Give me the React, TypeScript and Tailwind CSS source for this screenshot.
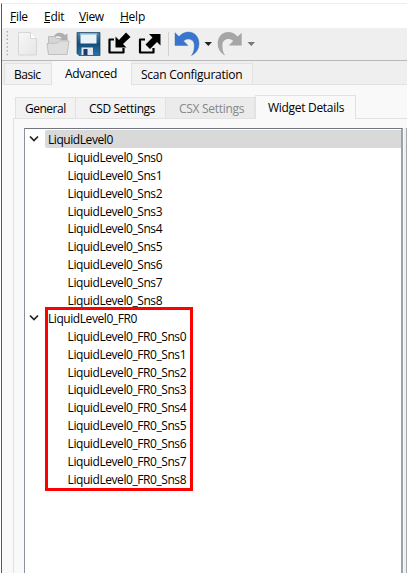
import React from 'react';

const sensors = [0, 1, 2, 3, 4, 5, 6, 7, 8];

function MenuItem({ label, className }: { label: string; className: string }) {
  return (
    <span className={`flex shrink-0 items-start ${className}`}>
      <span className="h-[15px] border-b border-black leading-[18px]">{label[0]}</span>
      <span>{label.slice(1)}</span>
    </span>
  );
}

function Parent({ name, selected = false }: { name: string; selected?: boolean }) {
  return (
    <div className="flex h-[17.9px] items-center">
      <svg className="ml-[4px] h-[10px] w-[10px] shrink-0" viewBox="0 0 10 10" fill="none" stroke="#222" strokeWidth="1.7">
        <path d="M1 2.5 5 6.5 9 2.5" />
      </svg>
      <div className={`ml-[6px] flex h-[18px] flex-1 items-center rounded-l-xs pl-[3px] ${selected ? 'bg-[#d9d9d9]' : ''}`}>
        <span className="pt-[2px]">{name}</span>
      </div>
    </div>
  );
}

function Toolbar() {
  return (
    <svg className="block h-8 w-full" viewBox="0 28 405 32">
      <defs>
        <linearGradient id="disk" x1="0" y1="0" x2="0" y2="1">
          <stop offset="0" stopColor="#4f87ad" />
          <stop offset=".5" stopColor="#164d79" />
          <stop offset="1" stopColor="#2477aa" />
        </linearGradient>
        <linearGradient id="paper" x1="0" y1="0" x2="1" y2="1">
          <stop offset="0" stopColor="#f8f8f8" />
          <stop offset="1" stopColor="#e5e5e5" />
        </linearGradient>
      </defs>
      <g transform="translate(-2 0)">
        <path d="M7.3 31v26" stroke="#aaa" strokeWidth="1.3" strokeDasharray="1.5 2.3" />
        <path d="M18.5 32.5h12l6 6V55h-18z" fill="url(#paper)" stroke="#d6d6d6" />
        <path d="M30.5 32.5v6h6" fill="#fff" stroke="#d6d6d6" />
        <path d="M48.5 54V36.5h6l2 2h10.5V54z" fill="#d5d5d5" stroke="#bcbcbc" />
        <path d="M53.5 37c2-5 8-5.5 11.5-2l2.5-1.5v6.5h-7.5l2-2c-2-2-5-2-8.5-1z" fill="#aeaeae" />
        <path d="m47 43.500 10.500-.5 1.500-2h10L67 54.500H48.500z" fill="#dedede" stroke="#c0c0c0" />
        <path d="M77 32.500h23v23H79l-2-2z" fill="url(#disk)" stroke="#153f60" strokeWidth=".7" />
        <path d="M80.500 33h16v10.500h-16z" fill="#e9f2f6" />
        <path d="M80.500 33h16v1.500h-16z" fill="#7eb4d2" />
        <path d="M81.500 47.500h11.500v7.500H81.500z" fill="#e1e6ee" />
        <path d="M83.500 49h4v6h-4z" fill="#193a75" />
        <path d="M114 39.500h-4.500V52.500h14V48" fill="none" stroke="#000" strokeWidth="2.2" strokeLinejoin="round" />
        <path d="M115.500 36.500 119 40l7-7.500 4.500 4.500-7.500 7 3.500 3.500h-11z" fill="#000" />
        <path d="M145 39.500h-5V52.500h13.500V48" fill="none" stroke="#000" strokeWidth="2.2" strokeLinejoin="round" />
        <path d="M149 34h11.500v11.500l-3.500-3.500-7 7-4.500-4.500 7-7z" fill="#000" />
        <path d="M168.500 32v24" stroke="#d2d2d2" />
        <path d="M175 32.7V45.5H188L183.500 41C188 37 194.300 39.500 194.300 45C194.300 49 194 52 191.500 55.500C196.500 53 199 48.500 199 43.500C199 32.500 187 28 179 36.500Z" fill="#3975cc" stroke="#2d67bc" strokeWidth=".4" />
        <path transform="translate(416.7 0) scale(-1 1)" d="M175 32.7V45.5H188L183.500 41C188 37 194.300 39.500 194.300 45C194.300 49 194 52 191.500 55.500C196.500 53 199 48.500 199 43.500C199 32.500 187 28 179 36.500Z" fill="#a6a6a6" />
        <path d="M204.500 42h7.500l-3.700 4z" fill="#222" />
        <path d="M247.500 42h7.500l-3.700 4z" fill="#777" />
      </g>
    </svg>
  );
}

export default function App() {
  return (
    <div className="h-[573px] w-[407px] overflow-hidden bg-white pt-[3px] pl-px font-['Open_Sans','Noto_Sans',sans-serif] text-[12px] leading-[18px] whitespace-nowrap text-black">
      <div className="flex h-[570px] flex-col border-t border-l border-t-[#eeeeee] border-l-[#555b60] bg-[#f9f9f9]">
        <nav className="flex h-6 shrink-0 items-center bg-white pt-px pl-2">
          <MenuItem label="File" className="w-[34px] tracking-[-0.3px]" />
          <MenuItem label="Edit" className="w-[35px] tracking-[-0.3px]" />
          <MenuItem label="View" className="w-[41px] tracking-[-0.4px]" />
          <MenuItem label="Help" className="tracking-[-0.25px]" />
        </nav>
        <div className="h-8 shrink-0 bg-[#efefef]"><Toolbar /></div>
        <div className="flex h-[25px] shrink-0 items-end border-t border-t-[#b8b8b8] bg-[#efefef]">
          <div className="ml-[2px] h-[22px] w-[48px] border border-[#e2e2e2] bg-[#f2f2f2] pl-[9px] leading-[22px] tracking-[-0.45px]">Basic</div>
          <div className="h-6 w-[79px] bg-[#f9f9f9] pl-[13px] leading-[25px] tracking-[-0.35px]">Advanced</div>
          <div className="h-[22px] w-[122px] border border-[#e2e2e2] bg-[#f2f2f2] pl-[9px] leading-[22px] tracking-[-0.26px]">Scan Configuration</div>
          <div className="h-px flex-1 bg-[#e2e2e2]" />
        </div>
        <div className="flex h-[34px] shrink-0 items-end pl-[11px]">
          <div className="h-[22px] w-[2px] border-b border-[#e2e2e2]" />
          <div className="h-[22px] w-[61px] border border-[#e2e2e2] bg-[#f2f2f2] pl-[9px] leading-[21px] tracking-[-0.5px]">General</div>
          <div className="h-[22px] w-[90px] border border-l-0 border-[#e2e2e2] bg-[#f2f2f2] pl-[13px] leading-[21px] tracking-[-0.36px]">CSD Settings</div>
          <div className="h-[22px] w-[89px] border border-l-0 border-[#e2e2e2] bg-[#ebebeb] pl-[13px] leading-[21px] tracking-[-0.3px] text-[#888]">CSX Settings</div>
          <div className="h-6 w-[101px] border border-b-0 border-[#e2e2e2] bg-[#f9f9f9] pl-[12px] leading-[23px] tracking-[-0.3px]">Widget Details</div>
          <div className="h-px flex-1 bg-[#e2e2e2]" />
        </div>
        <div className="ml-[11px] flex min-h-0 flex-1 border-l border-[#e2e2e2] pl-[10px]">
          <main className="mt-[9px] w-[379px] shrink-0 border-t border-r-2 border-l border-t-[#70767d] border-r-[#9ba1a8] border-l-[#8b9299] bg-white pt-px tracking-[-0.43px]">
            <Parent name="LiquidLevel0" selected />
            {sensors.map((n) => (
              <div key={n} className="h-[17.9px] pt-px pl-[42.6px]">LiquidLevel0_Sns{n}</div>
            ))}
            <div className="relative">
              <Parent name="LiquidLevel0_FR0" />
              {sensors.map((n) => (
                <div key={n} className="h-[17.9px] pt-px pl-[42.6px]">LiquidLevel0_FR0_Sns{n}</div>
              ))}
              <div className="absolute top-[-2px] left-[20px] h-[184px] w-[148px] border-3 border-[#f00]" />
            </div>
          </main>
          <div className="mt-[9px] ml-px flex-1 border-r border-r-[#aaa] bg-[#eeeeee]" />
        </div>
      </div>
    </div>
  );
}
